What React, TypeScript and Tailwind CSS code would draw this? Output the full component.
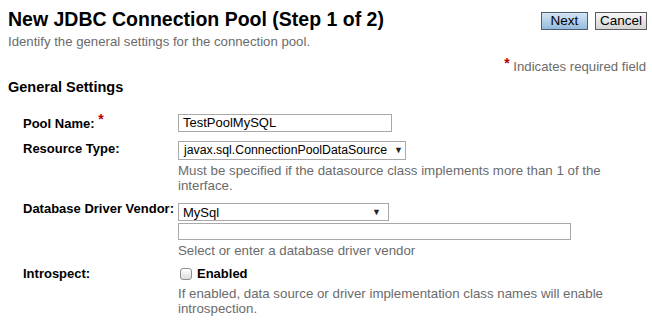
export default function App() {
  return (
    <div className="w-[652px] h-[326px] bg-white font-['Liberation_Sans',Arial,sans-serif] text-black pl-[8px] overflow-hidden">
      {/* Header */}
      <div className="flex justify-between items-start">
        <h1 className="pt-[7px] text-[19.5px] leading-6 font-bold">New JDBC Connection Pool (Step 1 of 2)</h1>
        <div className="mt-[12px] mr-[5px] flex gap-[7px]">
          <button className="w-[47px] h-[18px] border border-[#4c5d70] bg-linear-to-b from-[#d6e6f4] to-[#95badc] text-[13.5px] leading-none text-black">
            Next
          </button>
          <button className="w-[52px] h-[18px] border border-[#5c5c5c] bg-linear-to-b from-[#f7f7f7] to-[#d4d4d4] text-[13.5px] leading-none text-black">
            Cancel
          </button>
        </div>
      </div>
      <p className="mt-[3px] text-[13.2px] leading-4 text-[#6b6b6b]">
        Identify the general settings for the connection pool.
      </p>

      <p className="mt-[8px] pr-[6px] text-right text-[13.2px] leading-4 text-[#6b6b6b]">
        <span className="relative -top-[3px] text-[14px] font-bold text-[#b30000]">*</span> Indicates required field
      </p>

      <h2 className="mt-[4px] text-[14.5px] leading-4 font-bold">General Settings</h2>

      {/* Form */}
      <div className="mt-[19px] pl-[15px] text-[13px]">
        {/* Pool Name */}
        <div className="flex items-start">
          <div className="w-[155px] mt-[1px] leading-4 font-bold">
            Pool Name: <span className="relative -top-[4px] text-[14px] text-[#b30000]">*</span>
          </div>
          <div className="w-[214px] h-[18px] border border-[#a9a9a9] pl-[4px] leading-[16px]">TestPoolMySQL</div>
        </div>

        {/* Resource Type */}
        <div className="mt-[9px] flex items-start">
          <div className="w-[155px] leading-4 font-bold">Resource Type:</div>
          <div className="flex flex-col">
            <div className="w-[228px] h-[19px] border border-[#a9a9a9] pl-[5px] pr-[2px] flex items-center justify-between leading-none">
              <span className="text-[12.3px]">javax.sql.ConnectionPoolDataSource</span>
              <span className="text-[9px] text-[#222]">▼</span>
            </div>
            <p className="mt-[3px] w-[440px] text-[13.3px] leading-[15px] text-[#6b6b6b]">
              Must be specified if the datasource class implements more than 1 of the interface.
            </p>
          </div>
        </div>

        {/* Database Driver Vendor */}
        <div className="mt-[8px] flex items-start">
          <div className="w-[155px] leading-4 font-bold">Database Driver Vendor:</div>
          <div className="flex flex-col">
            <div className="mt-[2px] w-[211px] h-[18px] border border-[#a9a9a9] pl-[4px] pr-[7px] flex items-center justify-between leading-none">
              <span>MySql</span>
              <span className="text-[9px] text-[#222]">▼</span>
            </div>
            <div className="mt-[2px] w-[393px] h-[17px] border border-[#a9a9a9]"></div>
            <p className="mt-[3px] text-[13.3px] leading-[15px] text-[#6b6b6b]">Select or enter a database driver vendor</p>
          </div>
        </div>

        {/* Introspect */}
        <div className="mt-[8px] flex items-start">
          <div className="w-[155px] leading-4 font-bold">Introspect:</div>
          <div className="flex flex-col">
            <label className="flex items-center gap-[5px] leading-4 font-bold">
              <span className="ml-[2px] w-[12px] h-[12px] rounded-[3px] border border-[#8f8f8f] bg-linear-to-b from-white to-[#dcdcdc]"></span>
              Enabled
            </label>
            <p className="mt-[4px] w-[440px] text-[13.3px] leading-[15px] text-[#6b6b6b]">
              If enabled, data source or driver implementation class names will enable introspection.
            </p>
          </div>
        </div>
      </div>
    </div>
  );
}
